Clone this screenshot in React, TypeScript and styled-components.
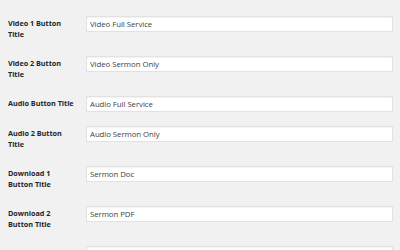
import React from "react";
import styled, { createGlobalStyle } from "styled-components";

const GlobalStyle = createGlobalStyle`
  html, body {
    margin: 0;
    padding: 0;
    background: #f1f1f1;
    font-family: "Open Sans", "Noto Sans", sans-serif;
  }
`;

const Page = styled.div`
  width: 400px;
  height: 250px;
  overflow: hidden;
  padding: 9px 0 0 8px;
  box-sizing: border-box;
`;

const FormTable = styled.div`
  display: flex;
  flex-direction: column;
`;

const Row = styled.div`
  display: flex;
  align-items: flex-start;
`;

const Label = styled.label`
  width: 78px;
  flex: none;
  padding: 9px 11px 9px 0;
  box-sizing: border-box;
  font-size: 7.3px;
  font-weight: 700;
  letter-spacing: -0.05px;
  line-height: 11px;
  color: #23282d;
`;

const Field = styled.div`
  padding: 7px 0;
  flex: none;
  width: 307px;
`;

const TextInput = styled.input`
  display: block;
  width: 100%;
  height: 16px;
  box-sizing: border-box;
  margin: 0;
  padding: 0 3px;
  border: 1px solid #e2e2e2;
  border-radius: 0;
  box-shadow: inset 0 1px 1px rgba(0, 0, 0, 0.05);
  background: #fff;
  font-family: "Open Sans", "Noto Sans", sans-serif;
  font-size: 7.8px;
  letter-spacing: -0.05px;
  color: #3c4146;
  outline: none;
`;

const fields = [
  { label: "Video 1 Button Title", value: "Video Full Service" },
  { label: "Video 2 Button Title", value: "Video Sermon Only" },
  { label: "Audio Button Title", value: "Audio Full Service" },
  { label: "Audio 2 Button Title", value: "Audio Sermon Only" },
  { label: "Download 1 Button Title", value: "Sermon Doc" },
  { label: "Download 2 Button Title", value: "Sermon PDF" },
  { label: "Scripture Button Title", value: "" },
];

export default function App() {
  return (
    <>
      <GlobalStyle />
      <Page>
        <FormTable>
          {fields.map((f) => (
            <Row key={f.label}>
              <Label>{f.label}</Label>
              <Field>
                <TextInput type="text" defaultValue={f.value} />
              </Field>
            </Row>
          ))}
        </FormTable>
      </Page>
    </>
  );
}
